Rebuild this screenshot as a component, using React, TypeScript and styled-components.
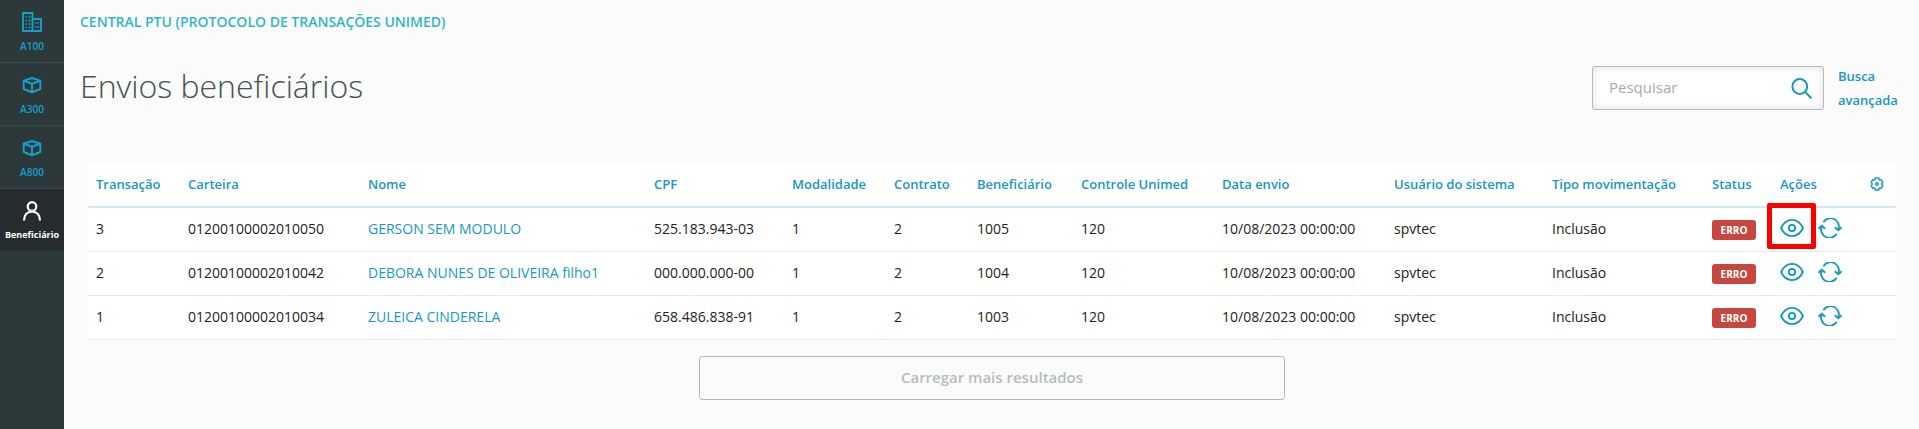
import React from "react";
import styled, { createGlobalStyle } from "styled-components";

const Global = createGlobalStyle`
  *, *::before, *::after { box-sizing: border-box; }
  body {
    margin: 0;
    background: #fbfbfb;
    color: #222;
    font-family: "Open Sans", sans-serif;
    font-size: 14px;
    line-height: 24px;
  }
`;

const BLUE = "#1798c1";

const Page = styled.div`
  display: flex;
  min-height: 100vh;
`;

const Sidebar = styled.nav`
  flex: 0 0 64px;
  background: #2d383a;
`;

const NavItem = styled.a<{ $active?: boolean }>`
  display: flex;
  flex-direction: column;
  align-items: center;
  height: 63px;
  padding-top: 10px;
  border-bottom: 1px solid ${(p) => (p.$active ? "#2d383a" : "#3d484a")};
  background: ${(p) => (p.$active ? "#242c2e" : "transparent")};
  color: ${(p) => (p.$active ? "#fff" : "#14a0c8")};
  font-size: ${(p) => (p.$active ? 9 : 10)}px;
  font-weight: ${(p) => (p.$active ? 700 : 600)};
  line-height: 12px;
  text-decoration: none;

  svg { margin-bottom: 6px; }
`;

const Content = styled.main`
  flex: 1;
  min-width: 0;
  padding: 10px 15px 28px 16px;
`;

const Breadcrumb = styled.p`
  margin: 0;
  color: #31b6c6;
  font-weight: 600;
`;

const Header = styled.header`
  display: flex;
  justify-content: space-between;
  align-items: center;
  margin-top: 30px;
`;

const Title = styled.h1`
  margin: 0;
  padding-bottom: 4px;
  color: #435254;
  font-size: 32px;
  font-weight: 300;
  line-height: 44px;
`;

const Search = styled.form`
  display: flex;
  align-items: center;
  gap: 14px;
`;

const Field = styled.div`
  display: flex;
  align-items: center;
  width: 232px;
  height: 44px;
  padding: 0 11px 0 16px;
  border: 1px solid #b0bbbd;
  border-radius: 3px;
  background: #fff;
  box-shadow: inset 0 0 8px rgba(0, 0, 0, 0.12);
`;

const SearchInput = styled.input`
  flex: 1;
  min-width: 0;
  padding: 0 0 2px;
  border: 0;
  outline: 0;
  background: transparent;
  color: #222;
  font: inherit;
  font-size: 15px;

  &::placeholder { color: #a5abac; opacity: 1; }
`;

const IconButton = styled.button`
  position: relative;
  display: flex;
  padding: 0;
  border: 0;
  background: none;
  color: ${BLUE};
  cursor: pointer;
`;

const AdvancedLink = styled.a`
  width: 66px;
  color: ${BLUE};
  font-size: 13px;
  font-weight: 600;
  text-decoration: none;
`;

const TableArea = styled.section`
  margin: 51px 8px 0;
`;

const Table = styled.table`
  width: 100%;
  table-layout: fixed;
  border-collapse: separate;
  border-spacing: 0;
  background: #fff;
`;

const Th = styled.th`
  height: 45px;
  padding: 0 0 2px 8px;
  border-bottom: 2px solid #cdeaf2;
  color: ${BLUE};
  font-size: 13px;
  font-weight: 600;
  text-align: left;
  white-space: nowrap;
`;

const Td = styled.td`
  height: 44px;
  padding: 0 0 2px 8px;
  border-bottom: 1px solid #e8ebeb;
  white-space: nowrap;
`;

const BadgeCell = styled(Td)`
  padding-bottom: 0;
`;

const NameLink = styled.a`
  color: ${BLUE};
  text-decoration: none;
`;

const Badge = styled.span`
  display: block;
  width: 44px;
  border-radius: 3px;
  background: #c6473f;
  color: #fff;
  font-size: 10px;
  font-weight: 700;
  line-height: 20px;
  text-align: center;
`;

const Actions = styled.div`
  display: flex;
  gap: 14px;
  padding-bottom: 2px;
`;

const Highlight = styled.span`
  position: absolute;
  inset: -15px -12px -11px -13px;
  border: 5px solid #f00;
  border-radius: 2px;
`;

const LoadMore = styled.button`
  display: block;
  width: 32.4%;
  height: 44px;
  margin: 16px auto 0;
  padding: 0 0 2px;
  border: 1px solid #b0bbbd;
  border-radius: 3px;
  background: transparent;
  color: #b4bdbf;
  font: inherit;
  font-size: 15px;
  font-weight: 600;
`;

const line = { fill: "none", stroke: "currentColor", "aria-hidden": true } as const;

const BuildingIcon = () => (
  <svg width="24" height="24" viewBox="0 0 24 24" {...line} strokeWidth="1.9">
    <path d="M3 21V3h9.500v18zM12.500 9H21v12h-8.500" />
    <path strokeWidth="1.500" d="M5.500 7h1.500m1.500 0h2M5.500 10.500h1.500m1.500 0h2M5.500 14h1.500m1.500 0h2M5.500 17.500h1.500m1.500 0h2M15 13h1.500m1 0h1.500M15 17h1.500m1 0h1.500" />
  </svg>
);

const BoxIcon = () => (
  <svg width="24" height="24" viewBox="0 0 24 24" {...line} strokeWidth="2" strokeLinejoin="round">
    <path d="M12 5l8.300 2.800v8.200L12 19.200l-8.300-3.200V7.800zM3.700 7.800l8.300 3 8.300-3M12 10.800v8.400" />
  </svg>
);

const PersonIcon = () => (
  <svg width="24" height="24" viewBox="0 0 24 24" {...line} strokeWidth="2.2">
    <circle cx="12" cy="7.500" r="4.300" />
    <path d="M4 21.500c0-5.500 3.200-8.900 8-8.900s8 3.400 8 8.900" />
  </svg>
);

const SearchIcon = () => (
  <svg width="21" height="21" viewBox="0 0 21 21" {...line} strokeWidth="2">
    <circle cx="8.800" cy="8.500" r="7.400" />
    <path d="M14 13.800l6.500 6.500" />
  </svg>
);

const EyeIcon = () => (
  <svg width="24" height="20" viewBox="0 0 24 20" {...line} strokeWidth="1.900" strokeLinejoin="round">
    <path d="M1.100 10C3.500 4.700 7.300 1.900 12 1.900S20.500 4.700 22.900 10C20.500 15.300 16.700 18.100 12 18.100S3.500 15.300 1.100 10z" />
    <circle cx="12" cy="10" r="3.100" />
  </svg>
);

const RefreshIcon = () => (
  <svg width="24" height="20" viewBox="0 0 24 20" {...line} strokeWidth="1.900">
    <path d="M5.400 4.300A8.300 8.300 0 0 1 20.300 11.500M18.600 15.700A8.300 8.300 0 0 1 3.700 8.500" />
    <path d="M16.800 9.300l3.500 3 3.200-3M.5 10.700l3.200-3 3.500 3" />
  </svg>
);

const GearIcon = () => (
  <svg width="14" height="14" viewBox="0 0 24 24" {...line} strokeWidth="2.400" strokeLinejoin="round">
    <path d="M9 1.800h6l.9 3.400 3.400-.8 2.700 4.800L19.800 12l2.200 2.800-2.700 4.800-3.400-.8-.9 3.400H9l-.9-3.400-3.400.8L2 14.800 4.200 12 2 9.200l2.700-4.800 3.400.8z" />
    <circle cx="12" cy="12" r="2.200" />
  </svg>
);

const nav = [
  { label: "A100", icon: <BuildingIcon /> },
  { label: "A300", icon: <BoxIcon /> },
  { label: "A800", icon: <BoxIcon /> },
  { label: "Beneficiário", icon: <PersonIcon />, active: true },
];

const columns: [string, number][] = [
  ["Transação", 92], ["Carteira", 180], ["Nome", 286], ["CPF", 138],
  ["Modalidade", 102], ["Contrato", 83], ["Beneficiário", 104],
  ["Controle Unimed", 141], ["Data envio", 172], ["Usuário do sistema", 158],
  ["Tipo movimentação", 160], ["Status", 68], ["Ações", 90],
];

const rows = [
  { id: "3", card: "01200100002010050", name: "GERSON SEM MODULO", cpf: "525.183.943-03", member: "1005" },
  { id: "2", card: "01200100002010042", name: "DEBORA NUNES DE OLIVEIRA filho1", cpf: "000.000.000-00", member: "1004" },
  { id: "1", card: "01200100002010034", name: "ZULEICA CINDERELA", cpf: "658.486.838-91", member: "1003" },
];

export default function App() {
  return (
    <Page>
      <Global />
      <Sidebar>
        {nav.map((n) => (
          <NavItem key={n.label} href="#" $active={n.active}>
            {n.icon}
            {n.label}
          </NavItem>
        ))}
      </Sidebar>
      <Content>
        <Breadcrumb>CENTRAL PTU (PROTOCOLO DE TRANSAÇÕES UNIMED)</Breadcrumb>
        <Header>
          <Title>Envios beneficiários</Title>
          <Search onSubmit={(e) => e.preventDefault()}>
            <Field>
              <SearchInput type="text" placeholder="Pesquisar" aria-label="Pesquisar" />
              <IconButton type="submit" aria-label="Buscar"><SearchIcon /></IconButton>
            </Field>
            <AdvancedLink href="#">Busca avançada</AdvancedLink>
          </Search>
        </Header>
        <TableArea>
          <Table>
            <colgroup>
              {columns.map(([label, width]) => <col key={label} width={width} />)}
              <col width={34} />
            </colgroup>
            <thead>
              <tr>
                {columns.map(([label]) => <Th key={label}>{label}</Th>)}
                <Th><IconButton type="button" aria-label="Configurar colunas"><GearIcon /></IconButton></Th>
              </tr>
            </thead>
            <tbody>
              {rows.map((r, i) => (
                <tr key={r.id}>
                  <Td>{r.id}</Td>
                  <Td>{r.card}</Td>
                  <Td><NameLink href="#">{r.name}</NameLink></Td>
                  <Td>{r.cpf}</Td>
                  <Td>1</Td>
                  <Td>2</Td>
                  <Td>{r.member}</Td>
                  <Td>120</Td>
                  <Td>10/08/2023 00:00:00</Td>
                  <Td>spvtec</Td>
                  <Td>Inclusão</Td>
                  <BadgeCell><Badge>ERRO</Badge></BadgeCell>
                  <Td>
                    <Actions>
                      <IconButton type="button" aria-label="Visualizar">
                        <EyeIcon />
                        {i === 0 && <Highlight />}
                      </IconButton>
                      <IconButton type="button" aria-label="Reenviar"><RefreshIcon /></IconButton>
                    </Actions>
                  </Td>
                  <Td />
                </tr>
              ))}
            </tbody>
          </Table>
          <LoadMore type="button">Carregar mais resultados</LoadMore>
        </TableArea>
      </Content>
    </Page>
  );
}
